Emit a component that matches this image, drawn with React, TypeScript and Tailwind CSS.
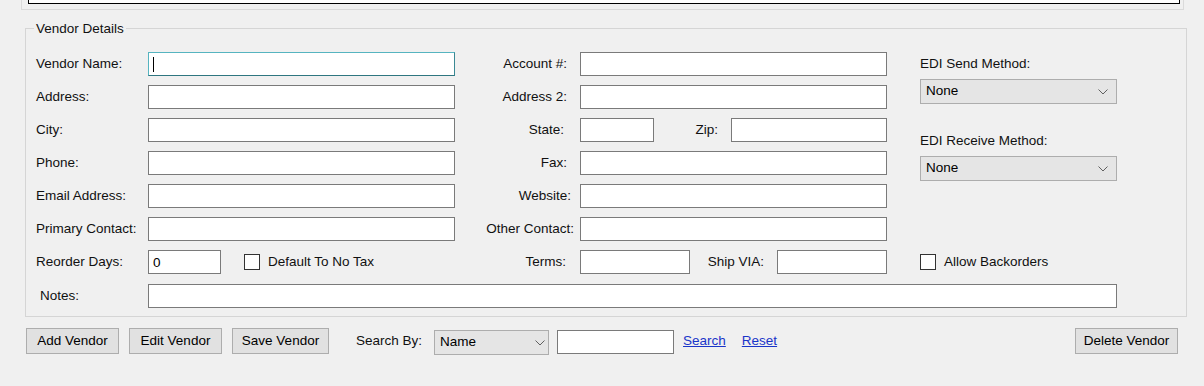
import React from "react";

const font = "font-['Liberation_Sans',Arial,sans-serif]";

function TextBox({ className = "", value = "" }: { className?: string; value?: string }) {
  return (
    <input
      readOnly
      defaultValue={value}
      className={`h-[24px] border border-[#7a7a7a] bg-white px-[4px] text-[13.5px] text-black outline-none ${className}`}
    />
  );
}

function FocusedBox({ className = "" }: { className?: string }) {
  return (
    <div
      className={`flex h-[24px] items-center border border-[#56b4c0] border-b-[#2f7680] border-r-[#3a8893] bg-white pl-[4px] ${className}`}
    >
      <span className="h-[15px] w-px bg-black" />
    </div>
  );
}

function Combo({ label, className = "", chevronPad = "pr-[8px]" }: { label: string; className?: string; chevronPad?: string }) {
  return (
    <div
      className={`flex h-[25px] items-center justify-between border border-[#adadad] bg-[#e5e5e5] pl-[5px] text-black ${chevronPad} ${className}`}
    >
      <span>{label}</span>
      <svg width="10" height="6" viewBox="0 0 10 6" fill="none">
        <path d="M0.5 0.5 L5 5 L9.5 0.5" stroke="#606060" strokeWidth="1" />
      </svg>
    </div>
  );
}

function CheckBox({ label }: { label: string }) {
  return (
    <div className="flex items-center gap-[8px]">
      <span className="size-[16px] border border-[#333333] bg-white" />
      <span>{label}</span>
    </div>
  );
}

function Button({ label, className = "" }: { label: string; className?: string }) {
  return (
    <button className={`h-[26px] border border-[#adadad] bg-[#e1e1e1] text-black ${className}`}>
      {label}
    </button>
  );
}

const leftRows = ["Vendor Name:", "Address:", "City:", "Phone:", "Email Address:", "Primary Contact:"];

export default function App() {
  return (
    <div className={`h-[386px] w-[1204px] overflow-hidden bg-[#f0f0f0] text-[13.5px] text-[#111] ${font}`}>
      {/* grid panel above, mostly scrolled off */}
      <div className="ml-[21px] mr-[20px] h-[10px] border-x border-b border-[#dadada] bg-[#f0f0f0]">
        <div className="ml-[6px] mr-[3px] h-[4px] border-x border-b border-black bg-white" />
      </div>

      <fieldset className="ml-[25px] mt-[11px] w-[1162px] border border-[#d5d5d5] pb-[8px] pl-[10px]">
        <legend className="-ml-[2px] px-[2px] leading-[15px]">Vendor Details</legend>

        <div className="mt-[16px] flex">
          {/* column 1 */}
          <div className="flex flex-col gap-[9px]">
            {leftRows.map((l, i) => (
              <div key={l} className="flex h-[24px] items-center">
                <span className="w-[112px]">{l}</span>
                {i === 0 ? <FocusedBox className="w-[307px]" /> : <TextBox className="w-[307px]" />}
              </div>
            ))}
            <div className="flex h-[24px] items-center">
              <span className="w-[112px]">Reorder Days:</span>
              <TextBox className="w-[73px]" value="0" />
              <div className="ml-[23px]">
                <CheckBox label="Default To No Tax" />
              </div>
            </div>
          </div>

          {/* column 2 */}
          <div className="ml-[15px] flex flex-col gap-[9px]">
            <div className="flex h-[24px] items-center">
              <span className="w-[110px] pr-[13px] text-right">Account #:</span>
              <TextBox className="w-[307px]" />
            </div>
            <div className="flex h-[24px] items-center">
              <span className="w-[110px] pr-[13px] text-right">Address 2:</span>
              <TextBox className="w-[307px]" />
            </div>
            <div className="flex h-[24px] items-center">
              <span className="w-[110px] pr-[16px] text-right">State:</span>
              <TextBox className="w-[74px]" />
              <span className="w-[77px] pr-[13px] text-right">Zip:</span>
              <TextBox className="w-[156px]" />
            </div>
            <div className="flex h-[24px] items-center">
              <span className="w-[110px] pr-[13px] text-right">Fax:</span>
              <TextBox className="w-[307px]" />
            </div>
            <div className="flex h-[24px] items-center">
              <span className="w-[110px] pr-[9px] text-right">Website:</span>
              <TextBox className="w-[307px]" />
            </div>
            <div className="flex h-[24px] items-center">
              <span className="w-[110px] pr-[6px] text-right whitespace-nowrap">Other Contact:</span>
              <TextBox className="w-[307px]" />
            </div>
            <div className="flex h-[24px] items-center">
              <span className="w-[110px] pr-[14px] text-right">Terms:</span>
              <TextBox className="w-[110px]" />
              <span className="w-[87px] pr-[13px] text-right">Ship VIA:</span>
              <TextBox className="w-[110px]" />
            </div>
          </div>

          {/* column 3 */}
          <div className="ml-[33px] flex flex-col">
            <div className="flex h-[24px] items-center">EDI Send Method:</div>
            <Combo label="None" className="mt-[3px] w-[197px]" />
            <div className="mt-[25px] flex h-[24px] items-center">EDI Receive Method:</div>
            <Combo label="None" className="mt-[3px] w-[197px]" />
            <div className="mt-[69px] flex h-[24px] items-center">
              <CheckBox label="Allow Backorders" />
            </div>
          </div>
        </div>

        <div className="mt-[10px] flex h-[24px] items-center">
          <span className="w-[112px] pl-[4px]">Notes:</span>
          <TextBox className="w-[969px]" />
        </div>
      </fieldset>

      <div className="mt-[11px] flex items-start pl-[26px] pr-[26px]">
        <Button label="Add Vendor" className="w-[93px]" />
        <Button label="Edit Vendor" className="ml-[10px] w-[93px]" />
        <Button label="Save Vendor" className="ml-[10px] w-[97px]" />
        <span className="ml-[27px] flex h-[26px] items-center">Search By:</span>
        <Combo label="Name" className="ml-[12px] mt-[2px] w-[115px]" chevronPad="pr-[3px]" />
        <TextBox className="ml-[8px] mt-[2px] w-[117px]" />
        <span className="ml-[9px] flex h-[26px] items-center text-[#1a35c9] underline">Search</span>
        <span className="ml-[16px] flex h-[26px] items-center text-[#1a35c9] underline">Reset</span>
        <Button label="Delete Vendor" className="ml-auto w-[103px]" />
      </div>
    </div>
  );
}
